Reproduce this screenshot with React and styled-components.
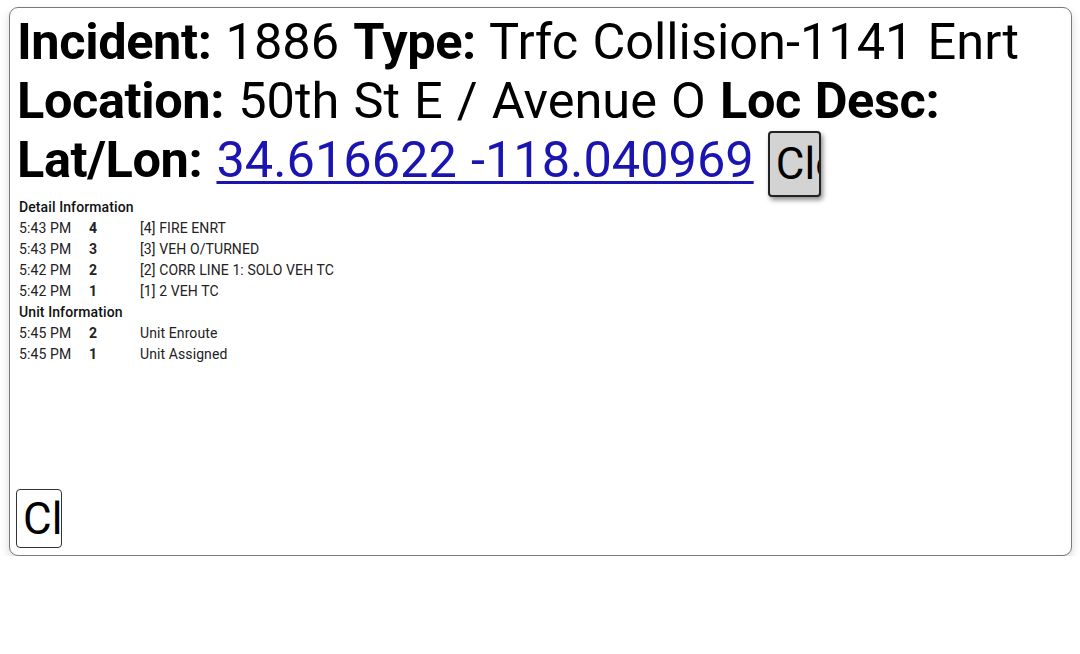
import styled, { createGlobalStyle } from "styled-components";

const GlobalStyle = createGlobalStyle`
  body {
    margin: 0;
    padding: 7px 9px 0 9px;
    background: #ffffff;
    font-family: Roboto, "Liberation Sans", sans-serif;
  }
`;

const details = [
  { time: "5:43 PM", num: 4, text: "[4] FIRE ENRT" },
  { time: "5:43 PM", num: 3, text: "[3] VEH O/TURNED" },
  { time: "5:42 PM", num: 2, text: "[2] CORR LINE 1: SOLO VEH TC" },
  { time: "5:42 PM", num: 1, text: "[1] 2 VEH TC" },
];

const units = [
  { time: "5:45 PM", num: 2, text: "Unit Enroute" },
  { time: "5:45 PM", num: 1, text: "Unit Assigned" },
];

export default function App() {
  return (
    <>
      <GlobalStyle />
      <Panel>
        <Header>
          <b>Incident:</b> 1886 <b>Type:</b> Trfc Collision-1141 Enrt
          <br />
          <b>Location:</b> 50th St E / Avenue O <b>Loc Desc:</b>
          <br />
          <b>Lat/Lon:</b> <MapLink href="#">34.616622 -118.040969</MapLink>{" "}
          <CloseButton $raised>Close</CloseButton>
        </Header>
        <Details>
          <SectionTitle>Detail Information</SectionTitle>
          {details.map((d, i) => (
            <Row key={"d" + i}>
              <span>{d.time}</span>
              <Num>{d.num}</Num>
              <span>{d.text}</span>
            </Row>
          ))}
          <SectionTitle>Unit Information</SectionTitle>
          {units.map((d, i) => (
            <Row key={"u" + i}>
              <span>{d.time}</span>
              <Num>{d.num}</Num>
              <span>{d.text}</span>
            </Row>
          ))}
        </Details>
        <Footer>
          <CloseButton>Close</CloseButton>
        </Footer>
      </Panel>
    </>
  );
}

const Panel = styled.div`
  box-sizing: border-box;
  width: 1063px;
  height: 549px;
  border: 1px solid #7a7a7a;
  border-radius: 9px;
  background: #ffffff;
  box-shadow: 0 4px 10px rgba(0, 0, 0, 0.16);
  display: flex;
  flex-direction: column;
  padding: 4px 7px 7px 7px;
  color: #000;
`;

const Header = styled.div`
  font-size: 50.5px;
  line-height: 59px;
  word-spacing: 1.6px;

  b {
    font-weight: 700;
    letter-spacing: -0.4px;
  }
`;

const MapLink = styled.a`
  color: #1a14b0;
  text-decoration: underline;
  text-decoration-thickness: 3px;
  text-underline-offset: 4px;
`;

const CloseButton = styled.button`
  box-sizing: border-box;
  width: ${(p) => (p.$raised ? "53px" : "46px")};
  height: ${(p) => (p.$raised ? "66px" : "59px")};
  margin: ${(p) => (p.$raised ? "-8px 0" : "0 0 0 -1px")};
  padding: 0 0 0 6px;
  overflow: hidden;
  white-space: nowrap;
  text-align: left;
  font-family: Roboto, "Liberation Sans", sans-serif;
  font-size: 44px;
  line-height: 1;
  word-spacing: normal;
  color: #000;
  border: ${(p) => (p.$raised ? "2px solid #222" : "1px solid #333")};
  border-radius: 4px;
  background: ${(p) => (p.$raised ? "#d3d3d3" : "#ffffff")};
  box-shadow: ${(p) => (p.$raised ? "2px 3px 5px rgba(0,0,0,0.45)" : "none")};
  vertical-align: middle;
`;

const Details = styled.div`
  margin-top: 8px;
  padding-left: 2px;
  font-size: 14px;
  line-height: 21px;
  letter-spacing: 0.1px;
  color: #222;
`;

const SectionTitle = styled.div`
  font-weight: 500;
  color: #111;
`;

const Row = styled.div`
  display: grid;
  grid-template-columns: 70px 51px 1fr;
`;

const Num = styled.span`
  font-weight: 700;
`;

const Footer = styled.div`
  margin-top: auto;
`;
